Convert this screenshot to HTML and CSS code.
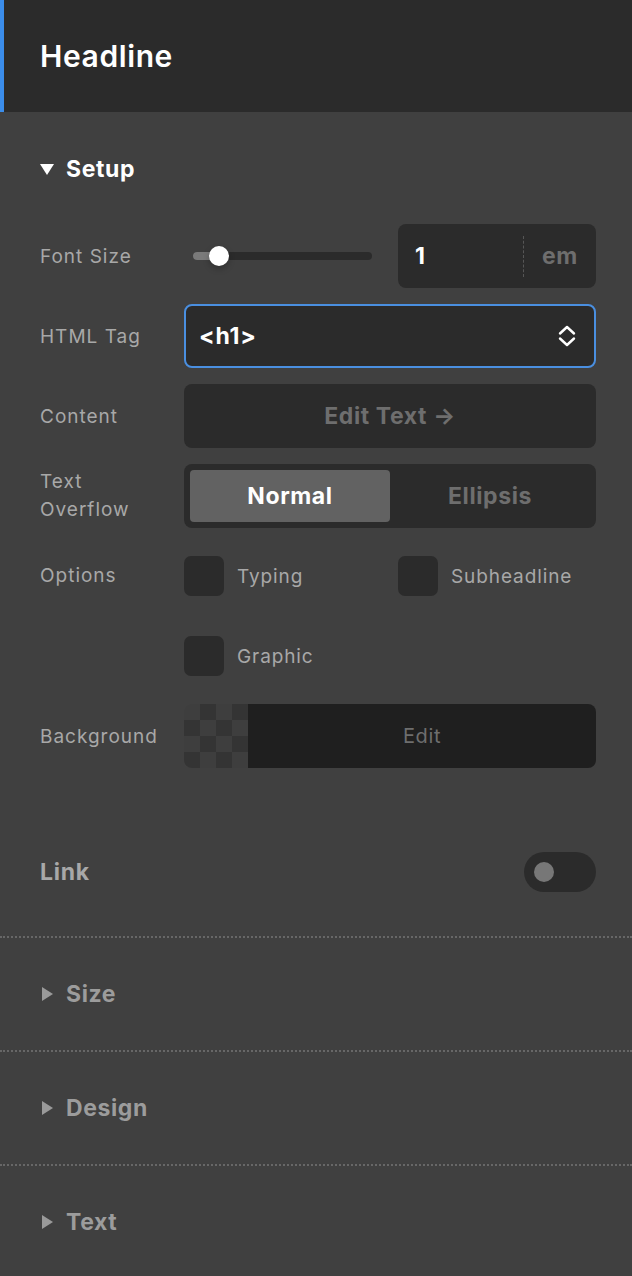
FILE: index.html
```html
<!DOCTYPE html>
<html lang="en">
<head>
    <meta charset="UTF-8">
    <title>Headline</title>
    <link rel="stylesheet" href="styles.css">
</head>
<body>
    <div class="panel">
        <header class="panel-head">
            <h1>Headline</h1>
        </header>

        <section class="setup">
            <div class="group-title open">
                <span class="caret"><svg width="14" height="11" viewBox="0 0 14 11"><polygon points="0,0 14,0 7,11" fill="#fff"/></svg></span>
                Setup
            </div>

            <div class="rows">
                <div class="row">
                    <div class="label">Font Size</div>
                    <div class="pair">
                        <div class="slider">
                            <div class="track"><div class="fill"></div></div>
                            <div class="thumb"></div>
                        </div>
                        <div class="num-input">
                            <span class="num">1</span>
                            <span class="unit">em</span>
                        </div>
                    </div>
                </div>

                <div class="row">
                    <div class="label">HTML Tag</div>
                    <div class="select">
                        <span>&lt;h1&gt;</span>
                        <svg width="18" height="22" viewBox="0 0 18 22"><path d="M2 8.5 L9 2 L16 8.5 M2 13.5 L9 20 L16 13.5" fill="none" stroke="#fff" stroke-width="2.4" stroke-linecap="round" stroke-linejoin="round"/></svg>
                    </div>
                </div>

                <div class="row">
                    <div class="label">Content</div>
                    <div class="btn">Edit Text →</div>
                </div>

                <div class="row">
                    <div class="label two-line">Text<br>Overflow</div>
                    <div class="segmented">
                        <div class="seg active">Normal</div>
                        <div class="seg">Ellipsis</div>
                    </div>
                </div>

                <div class="row options">
                    <div class="label">Options</div>
                    <div class="checks">
                        <label class="check"><span class="box"></span>Typing</label>
                        <label class="check"><span class="box"></span>Subheadline</label>
                        <label class="check"><span class="box"></span>Graphic</label>
                    </div>
                </div>

                <div class="row">
                    <div class="label">Background</div>
                    <div class="bg-picker">
                        <div class="checker"></div>
                        <div class="bg-edit">Edit</div>
                    </div>
                </div>
            </div>
        </section>

        <section class="link-row">
            <div class="link-title">Link</div>
            <div class="toggle"><span class="knob"></span></div>
        </section>

        <section class="group">
            <div class="group-title">
                <span class="caret"><svg width="11" height="14" viewBox="0 0 11 14"><polygon points="0,0 11,7 0,14" fill="#9a9a9a"/></svg></span>
                Size
            </div>
        </section>
        <section class="group">
            <div class="group-title">
                <span class="caret"><svg width="11" height="14" viewBox="0 0 11 14"><polygon points="0,0 11,7 0,14" fill="#9a9a9a"/></svg></span>
                Design
            </div>
        </section>
        <section class="group">
            <div class="group-title">
                <span class="caret"><svg width="11" height="14" viewBox="0 0 11 14"><polygon points="0,0 11,7 0,14" fill="#9a9a9a"/></svg></span>
                Text
            </div>
        </section>
    </div>
</body>
</html>
```

FILE: styles.css
```css
*{
    margin: 0;
    padding: 0;
    box-sizing: border-box;
}
body{
    background: #404040;
    font-family: Inter, "Noto Sans", sans-serif;
    color: #a8a8a8;
}
.panel{
    width: 632px;
}
.panel-head{
    height: 112px;
    background: #2b2b2b;
    border-left: 4px solid #3b8dea;
    padding-left: 36px;
    display: flex;
    align-items: center;
}
.panel-head h1{
    font-size: 30px;
    font-weight: 600;
    color: #fff;
    letter-spacing: 0.6px;
}

/* setup group */
.setup{
    padding: 37px 36px 0 40px;
}
.group-title{
    height: 40px;
    display: flex;
    align-items: center;
    gap: 12px;
    font-size: 23px;
    font-weight: 700;
    color: #9c9c9c;
    letter-spacing: 0.6px;
}
.group-title.open{
    color: #fff;
}
.caret{
    width: 14px;
    display: flex;
    justify-content: center;
    align-items: center;
}
.rows{
    margin-top: 35px;
    display: flex;
    flex-direction: column;
    gap: 16px;
}
.row{
    display: grid;
    grid-template-columns: 144px 1fr;
    align-items: center;
    min-height: 64px;
}
.label{
    font-size: 19px;
    letter-spacing: 1px;
    color: #a8a8a8;
}
.two-line{
    line-height: 28px;
}

/* font size */
.pair{
    display: grid;
    grid-template-columns: 1fr 1fr;
    gap: 16px;
    height: 64px;
}
.slider{
    position: relative;
    display: flex;
    align-items: center;
    padding: 0 10px 0 9px;
}
.track{
    flex: 1;
    height: 8px;
    border-radius: 4px;
    background: #2b2b2b;
    overflow: hidden;
}
.fill{
    width: 26px;
    height: 100%;
    background: #7a7a7a;
}
.thumb{
    position: absolute;
    left: 25px;
    top: 22px;
    width: 20px;
    height: 20px;
    border-radius: 50%;
    background: #fff;
    box-shadow: 0 3px 6px rgba(0,0,0,0.25);
}
.num-input{
    display: flex;
    align-items: center;
    background: #2b2b2b;
    border-radius: 8px;
}
.num{
    flex: 1;
    padding-left: 17px;
    font-size: 23px;
    font-weight: 700;
    color: #fff;
}
.unit{
    width: 73px;
    height: 41px;
    border-left: 1px dashed #565656;
    display: flex;
    align-items: center;
    justify-content: center;
    font-size: 23px;
    font-weight: 700;
    letter-spacing: 0.6px;
    color: #6e6e6e;
}

/* html tag */
.select{
    height: 64px;
    border: 2px solid #4a8fe0;
    border-radius: 8px;
    background: #2b2b2b;
    display: flex;
    align-items: center;
    justify-content: space-between;
    padding: 0 18px 0 13px;
    font-size: 23px;
    font-weight: 700;
    letter-spacing: 0.8px;
    color: #fff;
}

/* content */
.btn{
    height: 64px;
    border-radius: 8px;
    background: #2b2b2b;
    display: flex;
    align-items: center;
    justify-content: center;
    font-size: 23px;
    font-weight: 700;
    letter-spacing: 0.6px;
    color: #6e6e6e;
}

/* text overflow */
.segmented{
    height: 64px;
    border-radius: 8px;
    background: #2b2b2b;
    padding: 6px;
    display: grid;
    grid-template-columns: 1fr 1fr;
}
.seg{
    display: flex;
    align-items: center;
    justify-content: center;
    border-radius: 4px;
    font-size: 23px;
    font-weight: 700;
    letter-spacing: 0.6px;
    color: #6e6e6e;
}
.seg.active{
    background: #626262;
    color: #fff;
}

/* options */
.options{
    align-items: start;
}
.options .label{
    line-height: 64px;
}
.checks{
    display: grid;
    grid-template-columns: 1fr 1fr;
    column-gap: 16px;
    row-gap: 16px;
}
.check{
    height: 64px;
    display: flex;
    align-items: center;
    gap: 13px;
    font-size: 19px;
    letter-spacing: 0.9px;
    color: #a8a8a8;
}
.box{
    width: 40px;
    height: 40px;
    border-radius: 7px;
    background: #2b2b2b;
}

/* background */
.bg-picker{
    height: 64px;
    border-radius: 8px;
    overflow: hidden;
    display: flex;
}
.checker{
    width: 64px;
    background: repeating-conic-gradient(#343434 0 25%, #3e3e3e 0 50%) 0 0 / 32px 32px;
}
.bg-edit{
    flex: 1;
    background: #1f1f1f;
    display: flex;
    align-items: center;
    justify-content: center;
    font-size: 20px;
    letter-spacing: 0.6px;
    color: #6e6e6e;
}

/* link */
.link-row{
    padding: 72px 36px 32px 40px;
    display: flex;
    align-items: center;
    justify-content: space-between;
}
.link-title{
    height: 64px;
    display: flex;
    align-items: center;
    font-size: 23px;
    font-weight: 700;
    letter-spacing: 0.7px;
    color: #a8a8a8;
}
.toggle{
    width: 72px;
    height: 40px;
    border-radius: 20px;
    background: #2b2b2b;
    display: flex;
    align-items: center;
    padding-left: 10px;
}
.knob{
    width: 20px;
    height: 20px;
    border-radius: 50%;
    background: #777;
}

/* collapsed groups */
.group{
    border-top: 2px dotted #676767;
    height: 114px;
    padding-left: 40px;
    display: flex;
    align-items: center;
}
```
